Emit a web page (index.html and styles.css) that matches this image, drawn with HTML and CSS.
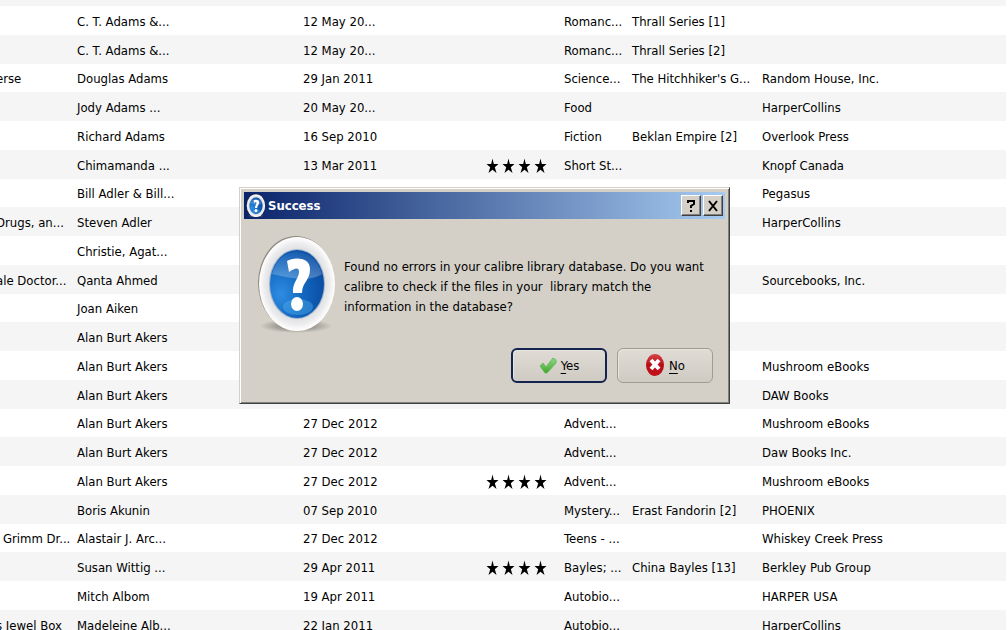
FILE: index.html
```
<!DOCTYPE html>
<html lang="en">
<head>
    <meta charset="UTF-8">
    <meta name="viewport" content="width=device-width, initial-scale=1.0">
    <title>calibre - Library</title>
    <link rel="stylesheet" href="styles.css">
</head>
<body>
    <!-- Shared icons -->
    <svg class="sprites" aria-hidden="true">
        <defs>
            <radialGradient id="blueDisc" cx="0.2" cy="0.65" r="0.8">
                <stop offset="0" stop-color="#2d8de2"/>
                <stop offset="0.5" stop-color="#1468c0"/>
                <stop offset="1" stop-color="#0a4ea4"/>
            </radialGradient>
            <linearGradient id="discGloss" x1="0" y1="0" x2="0" y2="1">
                <stop offset="0" stop-color="#ffffff" stop-opacity="0.05"/>
                <stop offset="1" stop-color="#ffffff" stop-opacity="0.25"/>
            </linearGradient>
            <radialGradient id="ring" cx="0.5" cy="0.5" r="0.5">
                <stop offset="0.7" stop-color="#dcdde0"/>
                <stop offset="0.86" stop-color="#ececee"/>
                <stop offset="1" stop-color="#ffffff"/>
            </radialGradient>
            <radialGradient id="shadow">
                <stop offset="0.4" stop-color="#77746d" stop-opacity="0.7"/>
                <stop offset="1" stop-color="#77746d" stop-opacity="0"/>
            </radialGradient>
            <linearGradient id="green" x1="0" y1="0" x2="0" y2="1">
                <stop offset="0" stop-color="#8fd88a"/>
                <stop offset="1" stop-color="#3fa726"/>
            </linearGradient>
            <linearGradient id="red" x1="0" y1="0" x2="0" y2="1">
                <stop offset="0" stop-color="#d8474b"/>
                <stop offset="0.5" stop-color="#b80c14"/>
                <stop offset="1" stop-color="#c4101a"/>
            </linearGradient>
        </defs>
        <symbol id="stars" viewBox="0 0 62 16">
            <g id="star">
                <path d="M6.500 0.500 L7.800 6 H12.500 L8.800 9.200 L10.500 15 L6.500 11.800 L2.500 15 L4.200 9.200 L0.500 6 H5.200 Z"/>
            </g>
            <use href="#star" x="16"/>
            <use href="#star" x="32"/>
            <use href="#star" x="48"/>
        </symbol>
        <symbol id="question" viewBox="0 0 80 100">
            <ellipse cx="39" cy="91" rx="36" ry="7" fill="url(#shadow)"/>
            <ellipse cx="39" cy="48" rx="38" ry="47" fill="#8d8b85"/>
            <ellipse cx="40" cy="49" rx="38" ry="47" fill="url(#ring)"/>
            <ellipse cx="40" cy="49" rx="28" ry="35" fill="#9fb3cc"/>
            <ellipse cx="40" cy="49" rx="27" ry="34" fill="url(#blueDisc)"/>
            <path d="M15 39 C19 25 28 17 40 17 C52 17 61 25 65 39 C52 48 28 42 15 39 Z" fill="url(#discGloss)"/>
            <ellipse cx="41" cy="72" rx="15" ry="8" fill="#55b4f0" opacity="0.4"/>
            <path d="M30 26 C37 22 53 22 53 34 C53 46 45 47 45 58 H36 C35 48 42 43 42 37 C42 32 38 33 32 37 Z" fill="#fff"/>
            <ellipse cx="40" cy="69" rx="6" ry="7" fill="#fff"/>
        </symbol>
    </svg>

    <table class="books" aria-label="Books">
        <colgroup>
            <col class="col-title">
            <col class="col-author">
            <col class="col-date">
            <col class="col-rating">
            <col class="col-tags">
            <col class="col-series">
            <col class="col-publisher">
        </colgroup>
        <tbody>
            <tr><td></td><td></td><td>12 May 20...</td><td></td><td></td><td>Thrall Series [3]</td><td></td></tr>
            <tr><td></td><td>C. T. Adams &amp;...</td><td>12 May 20...</td><td></td><td>Romanc...</td><td>Thrall Series [1]</td><td></td></tr>
            <tr><td></td><td>C. T. Adams &amp;...</td><td>12 May 20...</td><td></td><td>Romanc...</td><td>Thrall Series [2]</td><td></td></tr>
            <tr><td>erse</td><td>Douglas Adams</td><td>29 Jan 2011</td><td></td><td>Science...</td><td>The Hitchhiker's G...</td><td>Random House, Inc.</td></tr>
            <tr><td></td><td>Jody Adams ...</td><td>20 May 20...</td><td></td><td>Food</td><td></td><td>HarperCollins</td></tr>
            <tr><td></td><td>Richard Adams</td><td>16 Sep 2010</td><td></td><td>Fiction</td><td>Beklan Empire [2]</td><td>Overlook Press</td></tr>
            <tr><td></td><td>Chimamanda ...</td><td>13 Mar 2011</td><td><svg class="rating" role="img" aria-label="4 stars"><use href="#stars"/></svg></td><td>Short St...</td><td></td><td>Knopf Canada</td></tr>
            <tr><td></td><td>Bill Adler &amp; Bill...</td><td></td><td></td><td></td><td></td><td>Pegasus</td></tr>
            <tr><td>Drugs, an...</td><td>Steven Adler</td><td></td><td></td><td></td><td></td><td>HarperCollins</td></tr>
            <tr><td></td><td>Christie, Agat...</td><td></td><td></td><td></td><td></td><td></td></tr>
            <tr><td>ale Doctor...</td><td>Qanta Ahmed</td><td></td><td></td><td></td><td></td><td>Sourcebooks, Inc.</td></tr>
            <tr><td></td><td>Joan Aiken</td><td></td><td></td><td></td><td></td><td></td></tr>
            <tr><td></td><td>Alan Burt Akers</td><td></td><td></td><td></td><td></td><td></td></tr>
            <tr><td></td><td>Alan Burt Akers</td><td></td><td></td><td></td><td></td><td>Mushroom eBooks</td></tr>
            <tr><td></td><td>Alan Burt Akers</td><td></td><td></td><td></td><td></td><td>DAW Books</td></tr>
            <tr><td></td><td>Alan Burt Akers</td><td>27 Dec 2012</td><td></td><td>Advent...</td><td></td><td>Mushroom eBooks</td></tr>
            <tr><td></td><td>Alan Burt Akers</td><td>27 Dec 2012</td><td></td><td>Advent...</td><td></td><td>Daw Books Inc.</td></tr>
            <tr><td></td><td>Alan Burt Akers</td><td>27 Dec 2012</td><td><svg class="rating" role="img" aria-label="4 stars"><use href="#stars"/></svg></td><td>Advent...</td><td></td><td>Mushroom eBooks</td></tr>
            <tr><td></td><td>Boris Akunin</td><td>07 Sep 2010</td><td></td><td>Mystery...</td><td>Erast Fandorin [2]</td><td>PHOENIX</td></tr>
            <tr><td>' Grimm Dr...</td><td>Alastair J. Arc...</td><td>27 Dec 2012</td><td></td><td>Teens - ...</td><td></td><td>Whiskey Creek Press</td></tr>
            <tr><td></td><td>Susan Wittig ...</td><td>29 Apr 2011</td><td><svg class="rating" role="img" aria-label="4 stars"><use href="#stars"/></svg></td><td>Bayles; ...</td><td>China Bayles [13]</td><td>Berkley Pub Group</td></tr>
            <tr><td></td><td>Mitch Albom</td><td>19 Apr 2011</td><td></td><td>Autobio...</td><td></td><td>HARPER USA</td></tr>
            <tr><td>s Jewel Box</td><td>Madeleine Alb...</td><td>22 Jan 2011</td><td></td><td>Autobio...</td><td></td><td>HarperCollins</td></tr>
        </tbody>
    </table>

    <div class="dialog" role="dialog" aria-labelledby="dialogTitle">
        <div class="titlebar">
            <svg class="title-icon" aria-hidden="true"><use href="#question"/></svg>
            <h1 id="dialogTitle">Success</h1>
            <button class="caption-button" type="button" aria-label="Help">
                <svg width="10" height="14" viewBox="0 0 10 14"><path d="M2 4 V2 H8 V5 L5 7 V9 M5 11 V13" fill="none" stroke="#000" stroke-width="2"/></svg>
            </button>
            <button class="caption-button" type="button" aria-label="Close">
                <svg width="10" height="12" viewBox="0 0 10 12"><path d="M1 1 L9 11 M9 1 L1 11" fill="none" stroke="#000" stroke-width="2"/></svg>
            </button>
        </div>
        <div class="message">
            <svg class="message-icon" aria-hidden="true"><use href="#question"/></svg>
            <p>Found no errors in your calibre library database. Do you want<br>calibre to check if the files in your &nbsp;library match the<br>information in the database?</p>
        </div>
        <div class="buttons">
            <button class="button default" type="button">
                <svg width="18" height="20" viewBox="0 0 18 20"><path d="M1 10 L4 7 L7 11 L14 2 L17 4 L17 7 L8 17 L6 17 Z" fill="url(#green)" stroke="#6cb862" stroke-width="1"/></svg>
                <span><u>Y</u>es</span>
            </button>
            <button class="button" type="button">
                <svg width="20" height="24" viewBox="0 0 20 24"><ellipse cx="10" cy="11" rx="9" ry="11" fill="url(#red)"/><path d="M6 6 L14 15 M14 6 L6 15" stroke="#fff" stroke-width="4"/></svg>
                <span><u>N</u>o</span>
            </button>
        </div>
    </div>
</body>
</html>
```
FILE: styles.css
```
body {
    margin: 0;
    height: 100vh;
    overflow: hidden;
    background-color: #ffffff;
    color: #000000;
    font-family: "DejaVu Sans Condensed", "DejaVu Sans", sans-serif;
    font-size: 13px;
}

.sprites {
    position: absolute;
    width: 0;
    height: 0;
}

/* Book list, scrolled so the first row is partly out of view */
.books {
    width: calc(100% - 2px);
    margin-top: -23px;
    border-collapse: collapse;
    table-layout: fixed;
}

.books tr {
    height: 29px;
}

.books tr:nth-child(4n) {
    height: 28px;
}

.books tr:nth-child(odd) {
    background-color: #f5f5f5;
}

.books td {
    padding: 2px 0 0 3px;
    line-height: 20px;
    white-space: nowrap;
}

.books td:first-child {
    padding-left: 0;
    text-indent: -4px;
}

.col-title {
    width: 74px;
}

.col-author {
    width: 226px;
}

.col-date {
    width: 183px;
}

.col-rating {
    width: 78px;
}

.col-tags {
    width: 68px;
}

.col-series {
    width: 130px;
}

.rating {
    display: block;
    width: 62px;
    height: 16px;
}

/* Dialog */
.dialog {
    position: absolute;
    top: 187px;
    left: 50%;
    width: 491px;
    margin-left: -265px;
    padding: 3px 4px;
    box-sizing: border-box;
    background-color: #d4d0c8;
    border: 1px solid;
    border-color: #d4d0c8 #404040 #404040 #d4d0c8;
    box-shadow: inset 1px 1px #ffffff, inset -1px -1px #808080;
}

.titlebar {
    display: flex;
    align-items: center;
    gap: 2px;
    height: 27px;
    margin-top: 1px;
    padding: 0 2px;
    background: linear-gradient(to right, #0a246a, #a6caf0);
}

.titlebar h1 {
    flex: 1;
    margin: 0;
    color: #ffffff;
    font-size: 13px;
}

.title-icon {
    width: 20px;
    height: 24px;
}

.caption-button {
    display: flex;
    align-items: center;
    justify-content: center;
    width: 20px;
    height: 21px;
    padding: 0;
    background-color: #d4d0c8;
    border: 1px solid;
    border-color: #ffffff #404040 #404040 #ffffff;
    box-shadow: inset -1px -1px #808080;
}

.message {
    display: flex;
    align-items: center;
    gap: 7px;
    padding: 16px 13px 0;
}

.message-icon {
    width: 80px;
    height: 100px;
}

.message p {
    margin: 0;
    padding-top: 4px;
    line-height: 20px;
}

.buttons {
    display: flex;
    justify-content: flex-end;
    gap: 10px;
    padding: 13px 12px 17px;
}

.button {
    display: flex;
    align-items: center;
    justify-content: center;
    gap: 4px;
    width: 96px;
    height: 35px;
    padding: 0;
    background: linear-gradient(#e0dcd5, #cfcbc3);
    border: 1px solid #a09c92;
    border-radius: 6px;
    box-shadow: inset 1px 1px #e8e5df;
    color: #000000;
    font-family: inherit;
    font-size: 13px;
}

.button.default {
    border: 2px solid #14234f;
}

.button u {
    text-underline-offset: 3px;
}
```
